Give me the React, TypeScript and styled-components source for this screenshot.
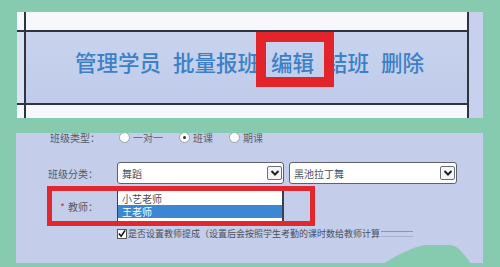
import React from 'react';
import styled, { createGlobalStyle } from 'styled-components';

const GlobalStyle = createGlobalStyle`
	html, body {
		margin: 0;
		padding: 0;
		background: #86cab0;
	}
	#root {
		width: 500px;
		height: 267px;
		overflow: hidden;
	}
`;

const cjk = `"Noto Sans CJK SC", "Noto Sans", sans-serif`;

const Page = styled.div`
	position: relative;
	display: flex;
	flex-direction: column;
	width: 500px;
	height: 267px;
	padding-top: 12px;
	box-sizing: border-box;
	background: #86cab0;
	font-family: ${cjk};
`;

const TopPanel = styled.div`
	display: flex;
	flex-shrink: 0;
	margin-left: 17px;
	width: 466px;
	height: 106px;
`;

const Table = styled.div`
	display: flex;
	flex-direction: column;
	width: 452px;
`;

const TableRow = styled.div<{ $h: number; $band?: boolean }>`
	display: flex;
	flex-shrink: 0;
	height: ${p => p.$h}px;
	background: ${p => p.$band ? 'linear-gradient(#c9d3ee, #bfcbea)' : '#f7f8fb'};
	${p => p.$band ? 'border-top: 2px solid #2f3540; border-bottom: 2px solid #2f3540;' : ''}
`;

const EdgeCell = styled.div<{ $band?: boolean }>`
	width: 7px;
	background: ${p => p.$band ? '#dbe2f3' : '#f7f8fb'};
`;

const MainCell = styled.div`
	flex: 1;
	display: flex;
	align-items: center;
	border-left: 2px solid #2f3540;
	border-right: 2px solid #2f3540;
	padding-left: 49px;
	padding-bottom: 12px;
	gap: 12px;
`;

const SideStrip = styled.div`
	width: 14px;
	background: #c7d0ed;
`;

const ActionLink = styled.span`
	font-size: 21.5px;
	font-weight: 500;
	color: #3b80c8;
	white-space: nowrap;
	line-height: 1;
`;

const HighlightBox = styled.span`
	position: relative;
	display: inline-flex;
	&::after {
		content: '';
		position: absolute;
		left: -15px;
		right: -20px;
		top: -19px;
		bottom: -15px;
		border: 10px solid #e2252b;
	}
`;

const FormPanel = styled.div`
	flex-shrink: 0;
	margin: 15px 0 0 16px;
	width: 467px;
	height: 130px;
	background: #c4cdea;
	overflow: hidden;
	padding-left: 31px;
	box-sizing: border-box;
	font-size: 10px;
	color: #4a4f5a;
`;

const FormRow = styled.div<{ $top: number }>`
	display: flex;
	align-items: center;
	margin-top: ${p => p.$top}px;
`;

const Label = styled.div<{ $w: number }>`
	width: ${p => p.$w}px;
	flex-shrink: 0;
	text-align: right;
	margin-right: 19px;
	white-space: nowrap;
	color: #555a66;
`;

const RadioItem = styled.label`
	display: inline-flex;
	align-items: center;
	margin-right: 16px;
	gap: 3px;
	color: #5a5f6a;
`;

const RadioDot = styled.span<{ $on?: boolean }>`
	position: relative;
	width: 9px;
	height: 9px;
	border-radius: 50%;
	border: 1px solid #9aa0ab;
	background: #fff;
	&::after {
		content: '';
		display: ${p => p.$on ? 'block' : 'none'};
		position: absolute;
		left: 3px;
		top: 3px;
		width: 3px;
		height: 3px;
		border-radius: 50%;
		background: #333;
	}
`;

const Select = styled.div<{ $w: number; $gapLeft?: number }>`
	display: flex;
	align-items: center;
	justify-content: space-between;
	width: ${p => p.$w}px;
	height: 22px;
	box-sizing: border-box;
	margin-left: ${p => p.$gapLeft || 0}px;
	padding: 0 1px 0 4px;
	background: #fff;
	border: 1px solid #5d626c;
	border-radius: 3px;
	color: #4d525c;
`;

const ArrowBox = styled.span`
	display: flex;
	align-items: center;
	justify-content: center;
	width: 15px;
	height: 14px;
	box-sizing: border-box;
	border: 1px solid #6a6f78;
	border-radius: 2px;
	background: #f4f5f8;
`;

const TeacherRow = styled.div`
	display: flex;
	align-items: center;
	width: 268px;
	height: 40px;
	box-sizing: border-box;
	margin-top: 2px;
	border: 5px solid #e0282e;
	padding-right: 26px;
`;

const Required = styled.span`
	color: #d83030;
	margin-right: 3px;
`;

const ListBox = styled.div`
	width: 167px;
	height: 30px;
	box-sizing: border-box;
	background: #fff;
	border-left: 1px solid #3a3f48;
	border-right: 2px solid #3a3f48;
	display: flex;
	flex-direction: column;
	padding-top: 1px;
`;

const Option = styled.div<{ $selected?: boolean }>`
	height: 13px;
	line-height: 13px;
	padding-left: 4px;
	font-size: 10px;
	background: ${p => p.$selected ? '#3c87d2' : '#fff'};
	color: ${p => p.$selected ? '#fff' : '#4a4f5a'};
`;

const CheckRow = styled.div`
	display: flex;
	align-items: center;
	margin-top: 1px;
	padding-left: 70px;
	font-size: 9px;
	color: #4a4f5a;
	white-space: nowrap;
`;

const CheckBox = styled.span`
	display: flex;
	align-items: center;
	justify-content: center;
	width: 10px;
	height: 10px;
	box-sizing: border-box;
	border: 1px solid #555;
	background: #fff;
	margin-right: 1px;
`;

const FadeTail = styled.span`
	display: inline-block;
	width: 32px;
	height: 4px;
	margin-left: 1px;
	border-top: 1px solid rgba(90, 95, 110, 0.5);
	border-bottom: 1px solid rgba(90, 95, 110, 0.25);
`;

const Hill = styled.svg`
	position: absolute;
	left: 383px;
	top: 244px;
`;

const Chevron = () => (
	<svg width="10" height="8" viewBox="0 0 10 8">
		<polyline points="1.5,2 5,5.5 8.5,2" fill="none" stroke="#222" strokeWidth="2" />
	</svg>
);

const actions = ['管理学员', '批量报班'];

export default function App() {
	return (
		<>
			<GlobalStyle />
			<Page>
				<TopPanel>
					<Table>
						<TableRow $h={18}>
							<EdgeCell />
							<MainCell />
						</TableRow>
						<TableRow $h={71} $band>
							<EdgeCell $band />
							<MainCell>
								{actions.map(a => <ActionLink key={a}>{a}</ActionLink>)}
								<HighlightBox><ActionLink>编辑</ActionLink></HighlightBox>
								<ActionLink>结班</ActionLink>
								<ActionLink>删除</ActionLink>
							</MainCell>
						</TableRow>
						<TableRow $h={13}>
							<EdgeCell />
							<MainCell />
						</TableRow>
					</Table>
					<SideStrip />
				</TopPanel>

				<FormPanel>
					<FormRow $top={-3}>
						<Label $w={53}>班级类型：</Label>
						<RadioItem><RadioDot />一对一</RadioItem>
						<RadioItem><RadioDot $on />班课</RadioItem>
						<RadioItem><RadioDot />期课</RadioItem>
					</FormRow>
					<FormRow $top={17}>
						<Label $w={51}>班级分类：</Label>
						<Select $w={167}>舞蹈<ArrowBox><Chevron /></ArrowBox></Select>
						<Select $w={168} $gapLeft={5}>黑池拉丁舞<ArrowBox><Chevron /></ArrowBox></Select>
					</FormRow>
					<TeacherRow>
						<Label $w={46}><Required>*</Required>教师：</Label>
						<ListBox>
							<Option>小艺老师</Option>
							<Option $selected>王老师</Option>
						</ListBox>
					</TeacherRow>
					<CheckRow>
						<CheckBox>
							<svg width="9" height="9" viewBox="0 0 9 9">
								<polyline points="1,4.5 3.5,7.5 8,1" fill="none" stroke="#111" strokeWidth="1.8" />
							</svg>
						</CheckBox>
						是否设置教师提成（设置后会按照学生考勤的课时数给教师计算
						<FadeTail />
					</CheckRow>
				</FormPanel>

				<Hill width="90" height="20" viewBox="0 0 90 20">
					<path d="M0 20 C 14 11, 30 3, 42 1 L 68 1 C 76 3, 82 11, 88 20 Z" fill="#86cab0" />
				</Hill>
			</Page>
		</>
	);
}
